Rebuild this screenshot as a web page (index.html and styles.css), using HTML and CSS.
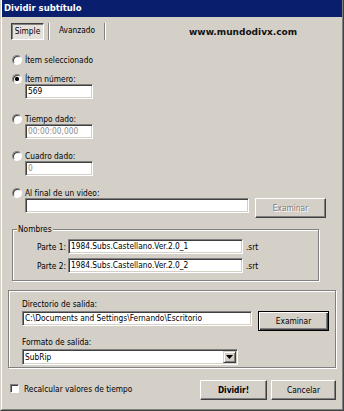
FILE: index.html
```html
<!DOCTYPE html>
<html lang="es">
<head>
    <meta charset="UTF-8">
    <title>Dividir subtítulo</title>
    <link rel="stylesheet" href="styles.css">
</head>
<body>
    <div class="window">
        <div class="frame">
            <div class="titlebar">Dividir subtítulo</div>

            <!-- Tabs -->
            <div class="tabs">
                <span class="tab tab-active">Simple</span>
                <span class="sep"></span>
                <span class="tab tab-plain">Avanzado</span>
                <span class="sep"></span>
                <span class="brand">www.mundodivx.com</span>
            </div>

            <!-- Split point options -->
            <div class="choices">
                <div class="opt opt-first"><span class="radio"></span>Ítem seleccionado</div>

                <div class="opt"><span class="radio radio-on"></span>Ítem número:</div>
                <div class="field field-small">569</div>

                <div class="opt opt-gap"><span class="radio"></span>Tiempo dado:</div>
                <div class="field field-small field-disabled">00:00:00,000</div>

                <div class="opt"><span class="radio"></span>Cuadro dado:</div>
                <div class="field field-small field-disabled">0</div>

                <div class="opt"><span class="radio"></span>Al final de un video:</div>
                <div class="video-row">
                    <div class="field field-video"></div>
                    <div class="btn btn-disabled btn-browse">Examinar</div>
                </div>
            </div>

            <!-- Output names -->
            <fieldset class="group">
                <legend>Nombres</legend>
                <div class="name-row name-row-first">
                    <span class="name-label">Parte 1:</span>
                    <div class="field field-name">1984.Subs.Castellano.Ver.2.0_1</div>
                    <span class="ext">.srt</span>
                </div>
                <div class="name-row">
                    <span class="name-label">Parte 2:</span>
                    <div class="field field-name">1984.Subs.Castellano.Ver.2.0_2</div>
                    <span class="ext">.srt</span>
                </div>
            </fieldset>

            <!-- Output settings -->
            <div class="panel">
                <div class="panel-label">Directorio de salida:</div>
                <div class="dir-row">
                    <div class="field field-dir">C:\Documents and Settings\Fernando\Escritorio</div>
                    <div class="btn btn-default btn-browse">Examinar</div>
                </div>
                <div class="panel-label panel-label-gap">Formato de salida:</div>
                <div class="field select">
                    <span class="select-text">SubRip</span>
                    <span class="drop">
                        <svg width="7" height="4" viewBox="0 0 7 4"><polygon points="0,0 7,0 3.5,4" fill="#000"/></svg>
                    </span>
                </div>
            </div>

            <!-- Footer -->
            <div class="footer">
                <div class="check-row">
                    <span class="check"></span>
                    <span>Recalcular valores de tiempo</span>
                </div>
                <div class="btn btn-main">Dividir!</div>
                <div class="btn btn-cancel">Cancelar</div>
            </div>
        </div>
    </div>
</body>
</html>
```

FILE: styles.css
```css
* {
    box-sizing: border-box;
}

body {
    margin: 0;
    background-color: #d4d0c8;
    font-family: "DejaVu Sans Condensed", "Liberation Sans", sans-serif;
    font-size: 8.3px;
    color: #000;
}

.window {
    width: 344px;
    height: 411px;
    background-color: #d4d0c8;
    border: 1px solid;
    border-top: 0;
    border-color: #d4d0c8 #404040 #404040 #d4d0c8;
}

.frame {
    height: 100%;
    border: 1px solid;
    border-top: 0;
    border-color: #fff #808080 #808080 #fff;
}

.titlebar {
    height: 17px;
    line-height: 17px;
    padding-left: 2px;
    background-color: #0a1e6e;
    color: #fff;
    font-family: "DejaVu Sans", sans-serif;
    font-weight: bold;
    font-size: 8.5px;
}

/* Tabs */
.tabs {
    display: flex;
    align-items: center;
    height: 17px;
    margin-top: 6px;
    padding-left: 9px;
}

.tab {
    height: 17px;
    line-height: 15px;
    text-align: center;
}

.tab-active {
    width: 33px;
    border: 1px solid;
    border-color: #404040 #fff #fff #404040;
    box-shadow: inset 1px 1px #808080;
    background-color: #e4e1db;
}

.tab-plain {
    width: 54px;
}

.sep {
    width: 2px;
    height: 17px;
    margin-left: 4px;
    border-left: 1px solid #808080;
    border-right: 1px solid #fff;
}

.tab-plain + .sep {
    margin-left: 0;
}

.brand {
    margin-left: 83px;
    font-family: "DejaVu Sans", sans-serif;
    font-weight: bold;
    font-size: 9px;
    color: #111;
}

/* Radio options */
.choices {
    padding-left: 10px;
}

.opt {
    display: flex;
    align-items: center;
    height: 12px;
    margin-top: 11px;
}

.opt-first {
    margin-top: 14px;
}

.opt-first + .opt {
    margin-top: 7px;
}

.opt-gap {
    margin-top: 14px;
}

.radio {
    width: 10px;
    height: 10px;
    margin-right: 3px;
    border-radius: 50%;
    border: 1px solid;
    border-color: #808080 #fff #fff #808080;
    box-shadow: inset 1px 1px #404040;
    background-color: #fff;
}

.radio-on {
    background: radial-gradient(circle, #000 0 1.8px, #fff 2.4px);
}

.field {
    height: 15px;
    padding: 0 2px;
    line-height: 13px;
    background-color: #fff;
    border: 1px solid;
    border-color: #808080 #fff #fff #808080;
    box-shadow: inset 1px 1px #404040, inset -1px -1px #d4d0c8;
    white-space: nowrap;
    overflow: hidden;
}

.field-small {
    width: 68px;
    margin-top: -1px;
    margin-left: 13px;
}

.field-disabled {
    color: #8c8c8c;
}

.video-row {
    display: flex;
    align-items: flex-start;
    margin-top: -1px;
    margin-left: 13px;
}

.field-video {
    width: 224px;
}

/* Buttons */
.btn {
    height: 20px;
    line-height: 18px;
    text-align: center;
    background-color: #d4d0c8;
    border: 1px solid;
    border-color: #fff #404040 #404040 #fff;
    box-shadow: inset -1px -1px #808080;
}

.btn-default {
    border-color: #000;
    box-shadow: inset 1px 1px #fff, inset -1px -1px #404040, inset -2px -2px #808080;
}

.btn-disabled {
    color: #808080;
    text-shadow: 1px 1px #fff;
}

.btn-browse {
    width: 71px;
    margin-left: 6px;
}

/* Nombres group */
.group {
    width: 307px;
    margin: 6px 0 0 10px;
    padding: 0 0 7px;
    border: 1px solid #808080;
    box-shadow: 1px 1px #fff, inset 1px 1px #fff;
}

.group legend {
    margin-left: 4px;
    padding: 0 1px;
    line-height: 10px;
    background-color: #d4d0c8;
}

.name-row {
    display: flex;
    align-items: center;
    height: 15px;
    margin-top: 4px;
}

.name-row-first {
    margin-top: 5px;
}

.name-label {
    width: 55px;
    padding-right: 2px;
    text-align: right;
}

.field-name {
    width: 175px;
}

.ext {
    margin-left: 3px;
}

/* Output panel */
.panel {
    width: 328px;
    margin: 9px 0 0 6px;
    padding: 8px 0 2px 13px;
    border: 1px solid #808080;
    box-shadow: 1px 1px #fff, inset 1px 1px #fff;
}

.panel-label {
    height: 10px;
    line-height: 10px;
}

.panel-label-gap {
    margin-top: 6px;
}

.dir-row {
    display: flex;
    align-items: flex-start;
    margin-top: 2px;
}

.field-dir {
    width: 230px;
}

.select {
    display: flex;
    align-items: stretch;
    width: 216px;
    height: 16px;
    margin-top: 2px;
    padding: 1px 1px 1px 2px;
}

.select-text {
    line-height: 12px;
}

.drop {
    display: flex;
    align-items: center;
    justify-content: center;
    width: 13px;
    margin-left: auto;
    background-color: #d4d0c8;
    border: 1px solid;
    border-color: #d4d0c8 #404040 #404040 #d4d0c8;
    box-shadow: inset 1px 1px #fff, inset -1px -1px #808080;
}

/* Footer */
.footer {
    display: flex;
    align-items: center;
    margin-top: 12px;
    padding: 0 6px 0 8px;
}

.check-row {
    display: flex;
    align-items: center;
    margin-bottom: 3px;
}

.check {
    width: 9px;
    height: 9px;
    margin-right: 5px;
    background-color: #fff;
    border: 1px solid;
    border-color: #808080 #fff #fff #808080;
    box-shadow: inset 1px 1px #404040;
}

.btn-main {
    width: 67px;
    margin-left: auto;
    font-weight: bold;
}

.btn-cancel {
    width: 65px;
    margin-left: 4px;
}
```
